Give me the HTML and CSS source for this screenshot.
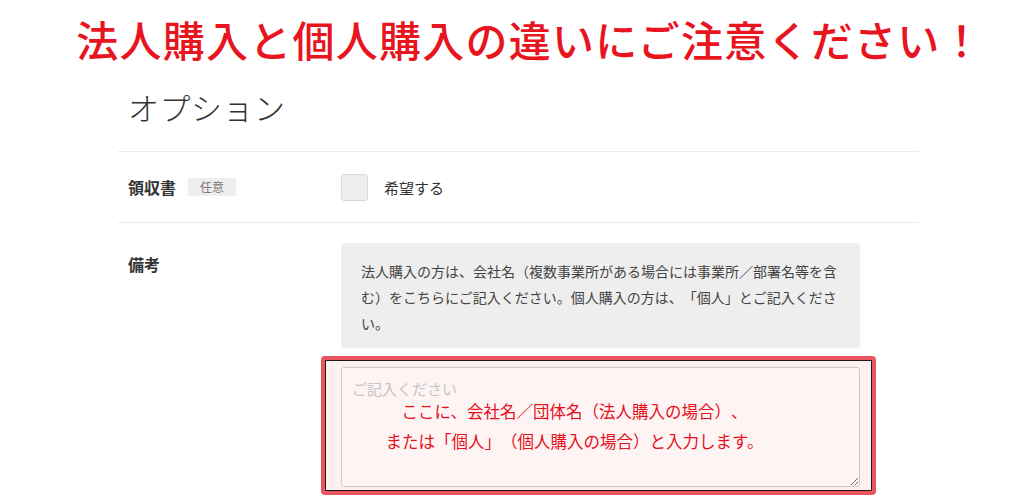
FILE: index.html
```html
<!DOCTYPE html>
<html lang="ja">
<head>
  <meta charset="UTF-8" />
  <meta name="viewport" content="width=device-width, initial-scale=1.0"/>
  <title>オプション</title>
  <link rel="stylesheet" href="styles.css">
</head>
<body>
  <h1 class="notice">法人購入と個人購入の違いにご注意ください！</h1>

  <div class="container">
    <h2 class="section-title">オプション</h2>

    <div class="row row-center">
      <div class="label">領収書 <span class="badge">任意</span></div>
      <div class="field">
        <label class="check">
          <span class="box"></span>
          希望する
        </label>
      </div>
    </div>

    <div class="row">
      <div class="label label-top">備考</div>
      <div class="field">
        <div class="note">法人購入の方は、会社名（複数事業所がある場合には事業所／部署名等を含む）をこちらにご記入ください。個人購入の方は、「個人」とご記入ください。</div>

        <div class="frame">
          <div class="frame-inner">
            <textarea class="memo" placeholder="ご記入ください"></textarea>
            <div class="annotation">
              ここに、会社名／団体名（法人購入の場合）、<br>
              または「個人」（個人購入の場合）と入力します。
            </div>
          </div>
        </div>
      </div>
    </div>
  </div>
</body>
</html>
```

FILE: styles.css
```css
body {
  font-family: "Noto Sans CJK JP", "Noto Sans", sans-serif;
  background: #fff;
  color: #333;
  margin: 0;
  text-spacing-trim: space-all;
}
.notice {
  margin: 0;
  padding: 18px 0 0 36px;
  font-size: 42px;
  line-height: 1;
  font-weight: 500;
  color: #e8141e;
  text-align: center;
  letter-spacing: 1.25px;
}
.container {
  width: 801px;
  margin-left: 118px;
}
.section-title {
  margin: 29px 0 0;
  padding: 0 0 26px 10px;
  font-size: 31px;
  line-height: 36px;
  font-weight: 300;
  letter-spacing: 0.5px;
  color: #333;
}
.row {
  display: flex;
  border-top: 1px solid #ebebeb;
  padding-left: 10px;
}
.row-center {
  height: 70px;
  align-items: center;
  border-bottom: 1px solid #ebebeb;
}
.row-center + .row {
  border-top: none;
}
.label {
  width: 213px;
  font-size: 16px;
  font-weight: 700;
  color: #333;
  display: flex;
  align-items: center;
}
.label-top {
  align-self: flex-start;
  padding-top: 30px;
  line-height: 22px;
}
.badge {
  display: inline-block;
  margin-left: 12px;
  width: 48px;
  height: 18px;
  line-height: 18px;
  text-align: center;
  background: #eee;
  border-radius: 2px;
  font-size: 12px;
  font-weight: 400;
  color: #777;
}
.field {
  width: 519px;
}
.check {
  display: flex;
  align-items: center;
  font-size: 15px;
  color: #333;
}
.box {
  width: 25px;
  height: 25px;
  background: #eee;
  border: 1px solid #d8d8d8;
  border-radius: 3px;
  margin-right: 16px;
}
.row + .row .field {
  padding-top: 20px;
}
.note {
  background: #eee;
  border-radius: 4px;
  padding: 15px 20px 12px;
  font-size: 14px;
  line-height: 26px;
  color: #444;
}
.frame {
  margin: 8px 0 0 -20px;
  width: 547px;
  border: 4px solid #ea5660;
  border-radius: 4px;
}
.frame-inner {
  position: relative;
  border: 1px solid #1a1a1a;
  background: #fff0f0;
  padding: 6px 10px 3px 15px;
}
.memo {
  display: block;
  box-sizing: border-box;
  width: 519px;
  height: 120px;
  margin: 0;
  padding: 10px;
  border: 1px solid #d3c6c6;
  border-radius: 3px;
  background: #fff4f4;
  font-family: inherit;
  font-size: 15px;
  line-height: 22px;
}
.memo::placeholder {
  color: #c4c4c4;
}
.annotation {
  position: absolute;
  top: 35px;
  left: 0;
  right: 0;
  padding-right: 48px;
  text-align: center;
  font-size: 16.5px;
  line-height: 30px;
  font-weight: 400;
  color: #e60f1a;
  pointer-events: none;
}
```
